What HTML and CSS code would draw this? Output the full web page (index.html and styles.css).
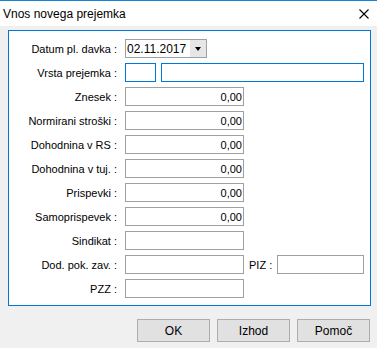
FILE: index.html
```
<!DOCTYPE html>
<html lang="sl">
<head>
  <meta charset="utf-8">
  <title>Vnos novega prejemka</title>
  <link rel="stylesheet" href="styles.css">
</head>
<body>

<div class="titlebar">
  <span class="title">Vnos novega prejemka</span>
  <svg class="close" width="10" height="10" viewBox="0 0 10 10">
    <path d="M0.5 0.5 L9.5 9.5 M9.5 0.5 L0.5 9.5" stroke="#000" stroke-width="1.1" fill="none" />
  </svg>
</div>

<form class="panel" action="#" method="post">
  <div class="row">
    <label class="lbl" for="datum">Datum pl. davka :</label>
    <div class="combo" id="datum">
      <span class="combo-text">02.11.2017</span>
      <span class="combo-btn"><span class="arrow"></span></span>
    </div>
  </div>
  <div class="row">
    <label class="lbl" for="vrsta">Vrsta prejemka :</label>
    <input class="fld focus small" type="text" id="vrsta" value="" />
    <input class="fld focus wide" type="text" id="vrsta2" value="" />
  </div>
  <div class="row">
    <label class="lbl" for="znesek">Znesek :</label>
    <input class="fld num" type="text" id="znesek" value="0,00" />
  </div>
  <div class="row">
    <label class="lbl" for="norm">Normirani stroški :</label>
    <input class="fld num" type="text" id="norm" value="0,00" />
  </div>
  <div class="row">
    <label class="lbl" for="dohrs">Dohodnina v RS :</label>
    <input class="fld num" type="text" id="dohrs" value="0,00" />
  </div>
  <div class="row">
    <label class="lbl" for="dohtuj">Dohodnina v tuj. :</label>
    <input class="fld num" type="text" id="dohtuj" value="0,00" />
  </div>
  <div class="row">
    <label class="lbl" for="prisp">Prispevki :</label>
    <input class="fld num" type="text" id="prisp" value="0,00" />
  </div>
  <div class="row">
    <label class="lbl" for="samo">Samoprispevek :</label>
    <input class="fld num" type="text" id="samo" value="0,00" />
  </div>
  <div class="row">
    <label class="lbl" for="sind">Sindikat :</label>
    <input class="fld num" type="text" id="sind" value="" />
  </div>
  <div class="row">
    <label class="lbl" for="dod">Dod. pok. zav. :</label>
    <input class="fld num" type="text" id="dod" value="" />
    <label class="lbl-inline" for="piz">PIZ :</label>
    <input class="fld piz" type="text" id="piz" value="" />
  </div>
  <div class="row">
    <label class="lbl" for="pzz">PZZ :</label>
    <input class="fld num" type="text" id="pzz" value="" />
  </div>
</form>

<div class="buttons">
  <button class="btn" type="button">OK</button>
  <button class="btn" type="button">Izhod</button>
  <button class="btn" type="button">Pomoč</button>
</div>

</body>
</html>
```

FILE: styles.css
```
body {
  margin: 0;
  width: 377px;
  height: 348px;
  overflow: hidden;
  background: #f0f0f0;
  font: 11px "Liberation Sans", Arial, sans-serif;
  color: #000;
}
.titlebar {
  display: flex;
  align-items: center;
  justify-content: space-between;
  height: 25px;
  border-top: 1px solid #1883d7;
  background: #fff;
  padding: 0 8px 0 3px;
}
.title {
  font-size: 12px;
  padding-top: 1px;
}
.close {
  display: block;
  margin-top: 1px;
}
.panel {
  box-sizing: border-box;
  display: flex;
  flex-direction: column;
  gap: 5px;
  width: 363px;
  height: 276px;
  margin: 4px 0 0 8px;
  padding: 8px 0 0;
  border: 1px solid #0078d7;
  background: #fff;
}
.row {
  display: flex;
  align-items: center;
  height: 19px;
}
.lbl {
  width: 108px;
  margin-right: 8px;
  text-align: right;
  white-space: nowrap;
}
.lbl-inline {
  margin: 0 5px;
  white-space: nowrap;
}
.fld {
  box-sizing: border-box;
  height: 19px;
  margin: 0;
  padding: 0 1px;
  border: 1px solid #a0a0a0;
  background: #fff;
  font: 11px "Liberation Sans", Arial, sans-serif;
  color: #000;
  outline: none;
}
.fld.num {
  width: 119px;
  text-align: right;
}
.fld.focus {
  border-color: #0078d7;
}
.fld.small {
  width: 31px;
  margin-right: 5px;
}
.fld.wide {
  width: 203px;
}
.fld.piz {
  width: 87px;
}
.combo {
  box-sizing: border-box;
  display: flex;
  width: 82px;
  height: 19px;
  border: 1px solid #a0a0a0;
  background: #fff;
}
.combo-text {
  flex: 1;
  padding: 2px 0 0 1px;
  font-size: 12px;
  line-height: 14px;
}
.combo-btn {
  display: flex;
  align-items: center;
  justify-content: center;
  width: 16px;
  background: #e6e6e6;
}
.arrow {
  width: 0;
  height: 0;
  border-left: 3.5px solid transparent;
  border-right: 3.5px solid transparent;
  border-top: 4px solid #000;
  margin-top: 1px;
}
.buttons {
  display: flex;
  justify-content: flex-end;
  gap: 7px;
  margin-top: 13px;
  padding-right: 7px;
}
.btn {
  box-sizing: border-box;
  width: 73px;
  height: 23px;
  margin: 0;
  padding: 0;
  border: 1px solid #adadad;
  background: #e1e1e1;
  font: 12px "Liberation Sans", Arial, sans-serif;
  color: #000;
}
```
